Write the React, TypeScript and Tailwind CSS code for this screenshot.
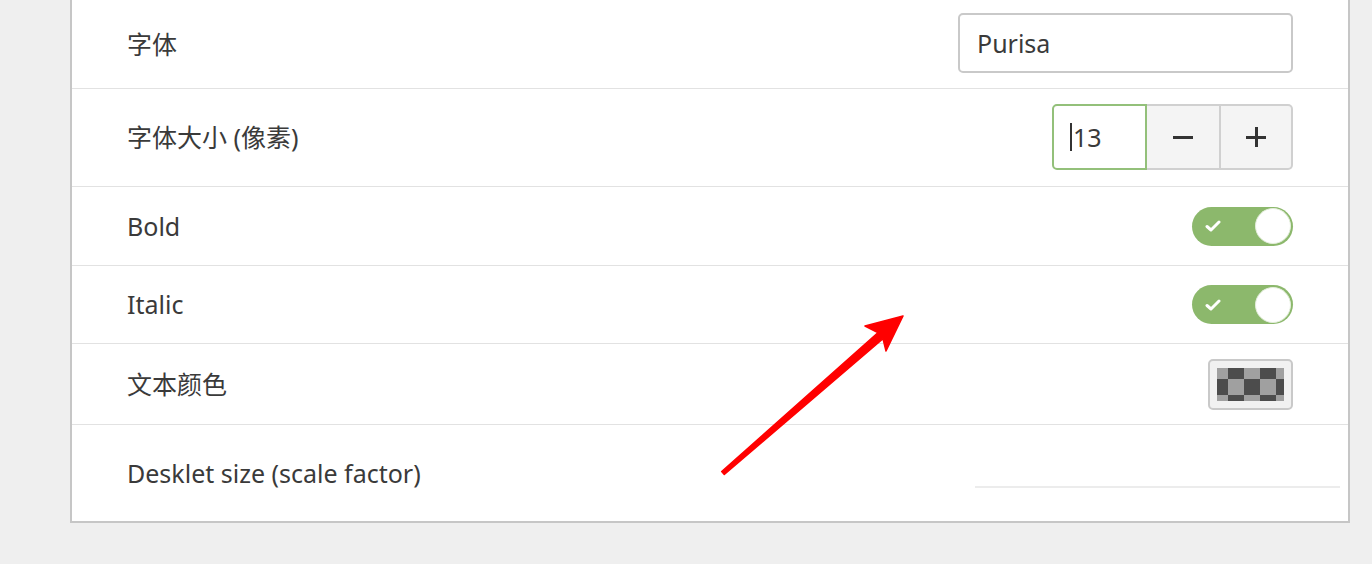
// Desklet settings panel: font, size, style switches, colour, scale

const font = "font-['Noto_Sans','Noto_Sans_CJK_SC',sans-serif]"

function Row({ label, h, last, children }: { label: string; h: string; last?: boolean; children?: React.ReactNode }) {
  return (
    <div className={`${h} flex items-center justify-between pl-[55px] pr-[55px] ${last ? '' : 'border-b border-[#e2e2e2]'}`}>
      <span className="text-[25px] leading-none text-[#3a3a3a]">{label}</span>
      {children}
    </div>
  )
}

function Toggle() {
  return (
    <div className="w-[101px] h-[39px] rounded-full bg-[#8cb86c] flex items-center justify-between pl-[13px] pr-[2px]">
      <svg width="16" height="12" viewBox="0 0 16 12">
        <path d="M2 6.5 L6 10 L14 2" fill="none" stroke="#fff" strokeWidth="3" strokeLinecap="round" strokeLinejoin="round" />
      </svg>
      <div className="w-[36px] h-[36px] rounded-full bg-white border border-[#e4eedc]" />
    </div>
  )
}

function Checker() {
  const cells = []
  const xs = [-6, 10, 26, 42, 58]
  const ys = [-6, 10, 26]
  for (let r = 0; r < ys.length; r++) {
    for (let c = 0; c < xs.length; c++) {
      const dark = (r + c) % 2 === 1
      cells.push(<rect key={`${r}-${c}`} x={xs[c] + 1} y={ys[r] + 1} width="16" height="16" fill={dark ? '#4c4c4c' : '#a0a0a0'} />)
    }
  }
  return (
    <svg width="67" height="33" viewBox="0 0 67 33">
      {cells}
    </svg>
  )
}

export default function App() {
  return (
    <div className={`relative w-[1372px] h-[564px] overflow-hidden bg-[#efefef] ${font}`}>
      <div className="ml-[70px] w-[1280px] bg-white border-x-2 border-b-2 border-[#c6c6c6]">
        <Row label="字体" h="h-[89px]">
          <div className="w-[335px] h-[60px] -mt-[2px] rounded-[5px] border-2 border-[#c9c9c9] flex items-center px-[17px] text-[25px] leading-none text-[#3a3a3a]">
            Purisa
          </div>
        </Row>
        <Row label="字体大小 (像素)" h="h-[98px]">
          <div className="flex h-[66px] -mt-[1px]">
            <div className="w-[95px] rounded-l-[5px] border-2 border-[#93c07a] flex items-center pl-[16px] text-[25px] leading-none text-[#3a3a3a]">
              <span className="w-[2px] h-[28px] bg-[#333] mr-[1px]" />
              13
            </div>
            <div className="w-[74px] bg-[#f4f4f4] border-y-2 border-r-2 border-[#d0d0d0] flex items-center justify-center">
              <span className="w-[20px] h-[3px] bg-[#333]" />
            </div>
            <div className="w-[72px] rounded-r-[5px] bg-[#f4f4f4] border-y-2 border-r-2 border-[#d0d0d0] flex items-center justify-center relative">
              <span className="w-[20px] h-[3px] bg-[#333]" />
              <span className="absolute w-[3px] h-[20px] bg-[#333]" />
            </div>
          </div>
        </Row>
        <Row label="Bold" h="h-[79px]">
          <Toggle />
        </Row>
        <Row label="Italic" h="h-[78px]">
          <Toggle />
        </Row>
        <Row label="文本颜色" h="h-[81px]">
          <div className="w-[85px] h-[51px] rounded-[5px] border-2 border-[#c9c9c9] bg-[#f1f1f1] flex items-center justify-center">
            <Checker />
          </div>
        </Row>
        <Row label="Desklet size (scale factor)" h="h-[96px]" last>
          <div className="self-end mb-[33px] w-[365px] h-[2px] bg-[#ececec] -mr-[47px]" />
        </Row>
      </div>

      {/* red annotation arrow */}
      <svg className="absolute inset-0 pointer-events-none" width="1372" height="564" viewBox="0 0 1372 564">
        <polygon
          points="903,316 865,326 877.8,332.7 721.7,471.5 724.3,474.5 883,338.7 886,351"
          fill="#ff0000"
          stroke="#ff0000"
          strokeWidth="1.5"
          strokeLinejoin="round"
        />
      </svg>
    </div>
  )
}
